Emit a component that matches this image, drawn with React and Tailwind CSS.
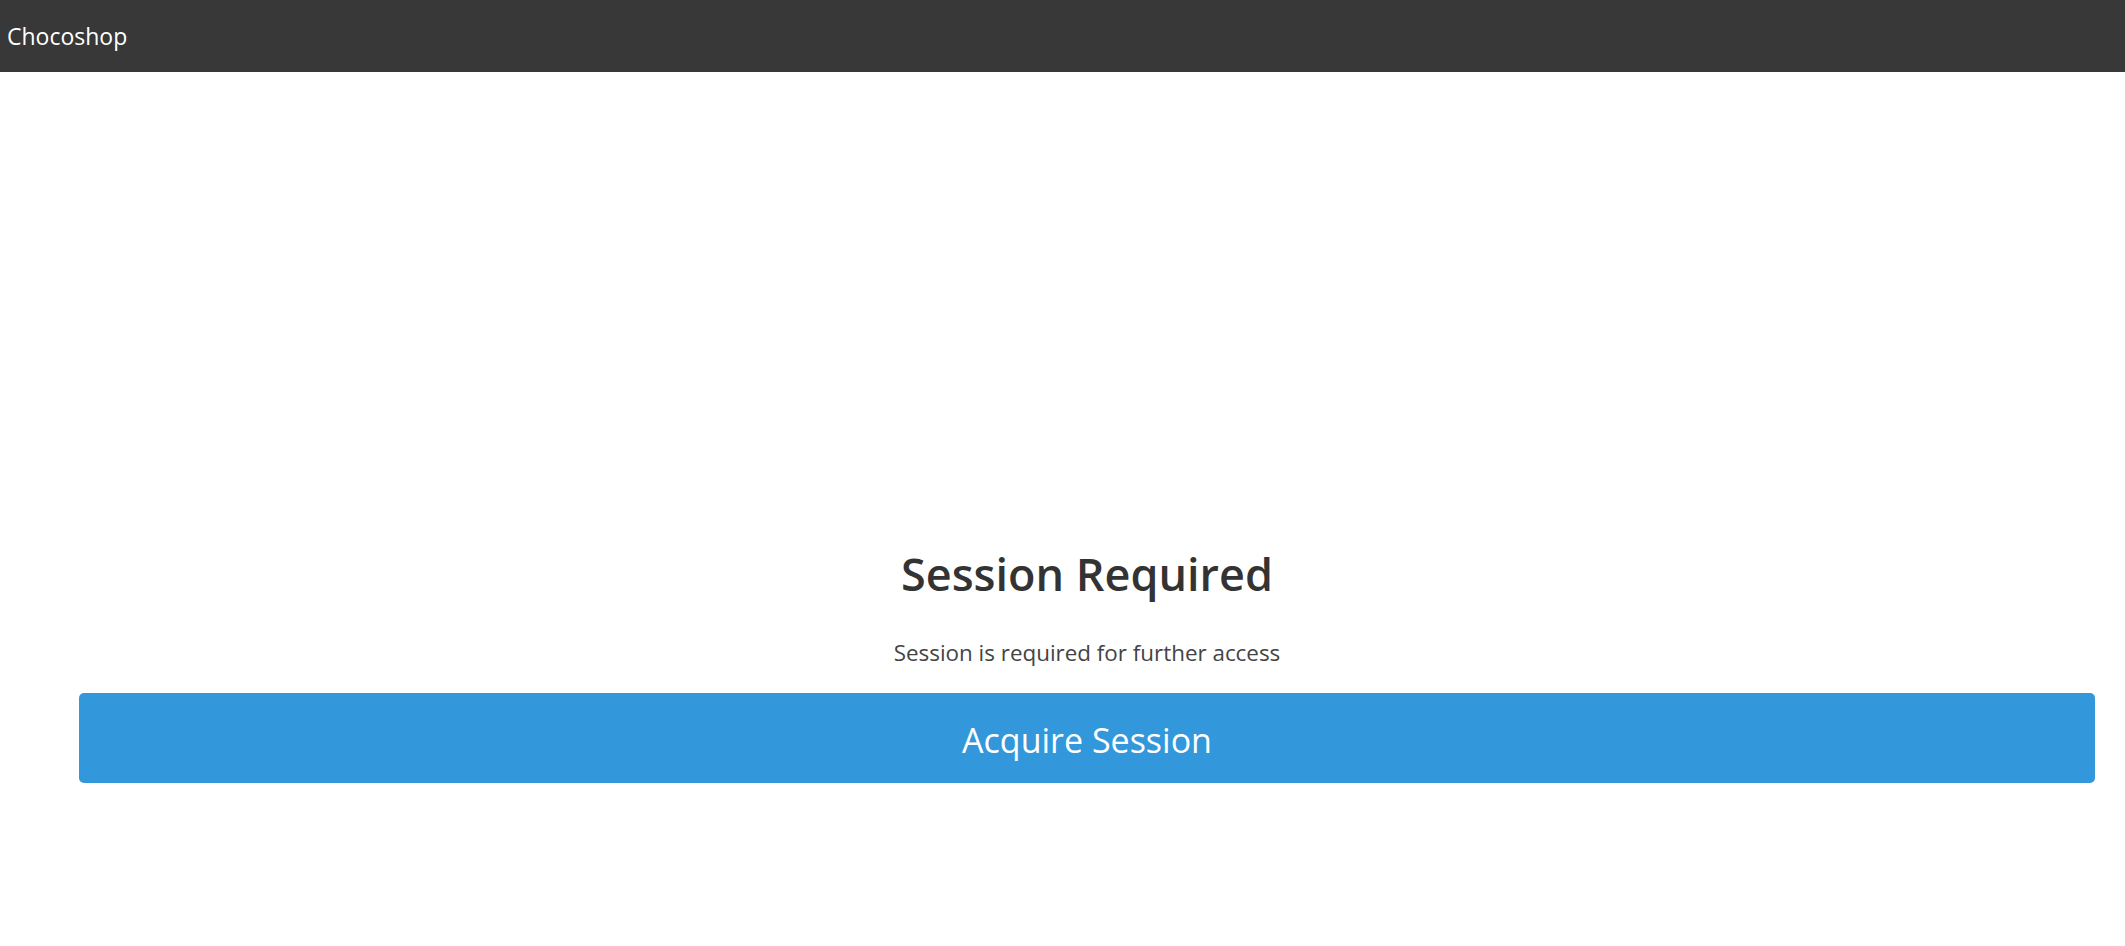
import React from "react"

const App = () => {
    return (
        <div className="min-h-screen bg-white" style={{ fontFamily: '"Open Sans", "Noto Sans", sans-serif' }}>
            <nav className="h-[72px] bg-[#383838] flex items-center px-[7px]">
                <span className="text-white text-[23px] leading-none">Chocoshop</span>
            </nav>
            <div className="ml-[79px] mr-[30px] pt-[475px] flex flex-col items-center">
                <h1 className="text-[45px] font-semibold text-[#333333] leading-[1.2]">Session Required</h1>
                <p className="mt-[37px] text-[22.4px] text-[#444444] leading-[1.3]">Session is required for further access</p>
                <button className="mt-[26px] w-full h-[90px] pt-[4px] rounded-[5px] bg-[#3297db] text-white text-[34px]">
                    Acquire Session
                </button>
            </div>
        </div>
    )
}

export default App
